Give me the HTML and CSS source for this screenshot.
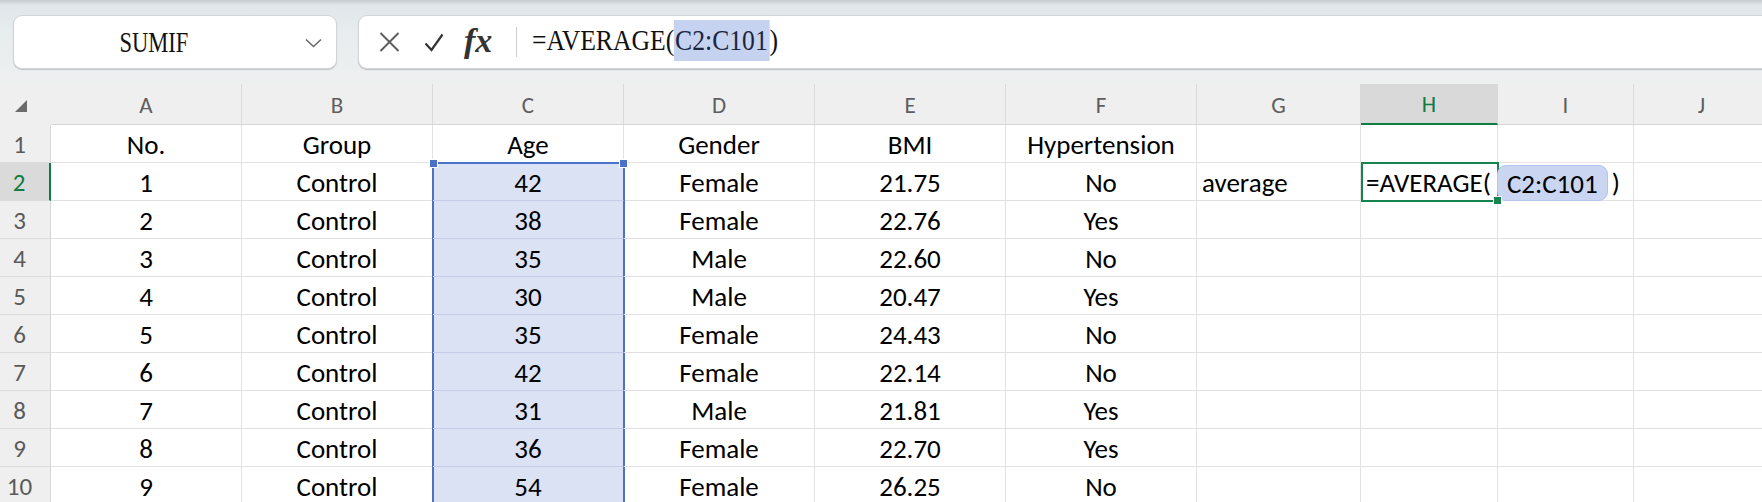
FILE: index.html
```html
<!DOCTYPE html>
<html lang="en">
<head>
  <meta charset="UTF-8" />
  <title>Book1 - Excel</title>
  <link rel="stylesheet" href="styles.css">
</head>
<body>
  <div class="toolbar">
    <div class="namebox">
      <span class="name"><span class="squash-name">SUMIF</span></span>
      <svg class="chev" width="17" height="10" viewBox="0 0 17 10"><polyline points="1,1.5 8.5,8.5 16,1.5" fill="none" stroke="#6b6b6b" stroke-width="1.6"/></svg>
    </div>
    <div class="formulabar">
      <svg class="ico-x" width="21" height="20" viewBox="0 0 21 20"><path d="M1.5 1 L19.5 19 M19.5 1 L1.5 19" stroke="#5c5c5c" stroke-width="1.9" fill="none"/></svg>
      <svg class="ico-ok" width="20" height="19" viewBox="0 0 20 19"><polyline points="1.5,10.5 7.5,17 18.5,1.5" fill="none" stroke="#333" stroke-width="2.2"/></svg>
      <span class="fx">fx</span>
      <span class="sep"></span>
      <span class="formula"><span class="squash">=AVERAGE(<span class="hl">C2:C101</span>)</span></span>
    </div>
  </div>

  <div class="sheet">
    <div class="corner"><svg width="12" height="12" viewBox="0 0 12 12"><path d="M12 0 V12 H0 Z" fill="#6b6b6b"/></svg></div>
    <div class="colhead">A</div><div class="colhead">B</div><div class="colhead">C</div><div class="colhead">D</div><div class="colhead">E</div><div class="colhead">F</div><div class="colhead">G</div><div class="colhead on">H</div><div class="colhead">I</div><div class="colhead">J</div>

    <div class="rowhead">1</div>
    <div>No.</div><div>Group</div><div>Age</div><div>Gender</div><div>BMI</div><div>Hypertension</div><div></div><div></div><div></div><div></div>

    <div class="rowhead on">2</div>
    <div>1</div><div>Control</div><div class="sel top">42</div><div>Female</div><div>21.75</div><div>No</div><div class="txt">average</div>
    <div class="txt active">=AVERAGE(<span class="ref">C2:C101</span>)</div><div></div><div></div>

    <div class="rowhead">3</div>
    <div>2</div><div>Control</div><div class="sel">38</div><div>Female</div><div>22.76</div><div>Yes</div><div></div><div></div><div></div><div></div>

    <div class="rowhead">4</div>
    <div>3</div><div>Control</div><div class="sel">35</div><div>Male</div><div>22.60</div><div>No</div><div></div><div></div><div></div><div></div>

    <div class="rowhead">5</div>
    <div>4</div><div>Control</div><div class="sel">30</div><div>Male</div><div>20.47</div><div>Yes</div><div></div><div></div><div></div><div></div>

    <div class="rowhead">6</div>
    <div>5</div><div>Control</div><div class="sel">35</div><div>Female</div><div>24.43</div><div>No</div><div></div><div></div><div></div><div></div>

    <div class="rowhead">7</div>
    <div>6</div><div>Control</div><div class="sel">42</div><div>Female</div><div>22.14</div><div>No</div><div></div><div></div><div></div><div></div>

    <div class="rowhead">8</div>
    <div>7</div><div>Control</div><div class="sel">31</div><div>Male</div><div>21.81</div><div>Yes</div><div></div><div></div><div></div><div></div>

    <div class="rowhead">9</div>
    <div>8</div><div>Control</div><div class="sel">36</div><div>Female</div><div>22.70</div><div>Yes</div><div></div><div></div><div></div><div></div>

    <div class="rowhead">10</div>
    <div>9</div><div>Control</div><div class="sel">54</div><div>Female</div><div>26.25</div><div>No</div><div></div><div></div><div></div><div></div>
  </div>
</body>
</html>
```

FILE: styles.css
```css
* {
  box-sizing: border-box;
}
body {
  margin: 0;
  width: 1762px;
  height: 502px;
  overflow: hidden;
  background: #fff;
  font-family: Carlito, Lato, sans-serif;
}

/* formula bar */
.toolbar {
  display: flex;
  gap: 21px;
  height: 84px;
  padding: 15px 0 15px 13px;
  background: linear-gradient(#c4cacd 0, #e0e6e9 5px, #e7ecee 30px, #eef0f0 84px);
}
.namebox {
  width: 324px;
  height: 54px;
  background: #fff;
  border: 1px solid #d2d5d7;
  border-radius: 9px;
  box-shadow: 0 1px 1px rgba(0, 0, 0, 0.18);
  display: flex;
  align-items: center;
  padding-right: 14px;
}
.name {
  flex: 1;
  text-align: center;
  padding-right: 12px;
}
.squash-name,
.squash {
  display: inline-block;
  font-family: 'Liberation Serif', serif;
  font-size: 30px;
  color: #111;
}
.squash-name {
  transform: scaleX(0.75);
}
.squash {
  transform: scaleX(0.855);
  transform-origin: left center;
}
.chev {
  margin-top: 2px;
}
.formulabar {
  flex: 1;
  margin-right: -20px;
  height: 54px;
  background: #fff;
  border: 1px solid #d2d5d7;
  border-radius: 9px 0 0 9px;
  box-shadow: 0 1px 1px rgba(0, 0, 0, 0.2);
  display: flex;
  align-items: center;
  padding-left: 20px;
}
.ico-x {
  margin-right: 24px;
}
.ico-ok {
  margin-right: 20px;
}
.fx {
  font-family: 'Liberation Serif', serif;
  font-style: italic;
  font-weight: bold;
  font-size: 34px;
  color: #333;
  margin-right: 24px;
  margin-top: -2px;
}
.sep {
  width: 1px;
  height: 30px;
  background: #cfcfcf;
  margin-right: 15px;
}
.formula {
  margin-top: -4px;
}
.hl {
  background: #c6d3f0;
  padding: 3px 2px 5px 1px;
  color: #1c2540;
}

/* grid */
.sheet {
  display: grid;
  grid-template-columns: 51px repeat(6, 191px) 164px 137px 136px 136px;
  grid-template-rows: 41px repeat(10, 38px);
}
.sheet > div {
  display: flex;
  align-items: center;
  justify-content: center;
  white-space: nowrap;
  font-size: 27px;
  color: #000;
  padding-top: 2px;
  border-right: 1px solid #e1e1e1;
  border-bottom: 1px solid #e1e1e1;
}
.sheet > .corner {
  background: #efefef;
  border: none;
  justify-content: flex-end;
  align-items: flex-end;
  padding: 0 24px 13px 0;
}
.sheet > .colhead {
  background: #efefef;
  color: #5e5e5e;
  font-size: 23px;
  padding-top: 1px;
  border-right-color: #d9d9d9;
  border-bottom-color: #d6d6d6;
}
.sheet > .colhead.on {
  background: #d9d9d9;
  color: #107c41;
  border-bottom: 2px solid #107c41;
}
.sheet > .rowhead {
  background: #efefef;
  color: #5a5a5a;
  font-size: 25px;
  padding-right: 11px;
  border-right-color: #d6d6d6;
  border-bottom-color: #dcdcdc;
}
.sheet > .rowhead.on {
  background: #dadada;
  color: #107c41;
  border-right: 2px solid #107c41;
}
.sheet > .txt {
  justify-content: flex-start;
  padding-left: 5px;
}

/* selected range C2:C10 */
.sheet > .sel {
  background: #dbe2f4;
  border-bottom-color: #c5cde8;
  border-right-color: #4a72c9;
  box-shadow: -1px 0 0 #4a72c9, 1px 0 0 #4a72c9, inset 1px 0 0 #4a72c9;
}
.sheet > .sel.top {
  position: relative;
  box-shadow: -1px 0 0 #4a72c9, 1px 0 0 #4a72c9, 0 -1px 0 #4a72c9, inset 1px 0 0 #4a72c9, inset 0 1px 0 #4a72c9;
}
.sel.top::before,
.sel.top::after {
  content: "";
  position: absolute;
  top: -4px;
  width: 7px;
  height: 7px;
  background: #4a72c9;
  border: 1px solid #fff;
}
.sel.top::before {
  left: -4px;
}
.sel.top::after {
  right: -5px;
}

/* active cell H2 */
.sheet > .active {
  position: relative;
  z-index: 1;
}
.active::before {
  content: "";
  position: absolute;
  top: -1px;
  left: 0;
  right: -2px;
  bottom: -2px;
  border: 2px solid #178450;
  z-index: -1;
}
.active::after {
  content: "";
  position: absolute;
  right: -5px;
  bottom: -5px;
  width: 7px;
  height: 7px;
  background: #178450;
  border: 1px solid #fff;
}
.ref {
  background: #c9d5f1;
  border: 1px solid #b5c4ea;
  border-radius: 9px;
  padding: 1px 9px 0;
  margin: 0 4px 0 6px;
}
```
